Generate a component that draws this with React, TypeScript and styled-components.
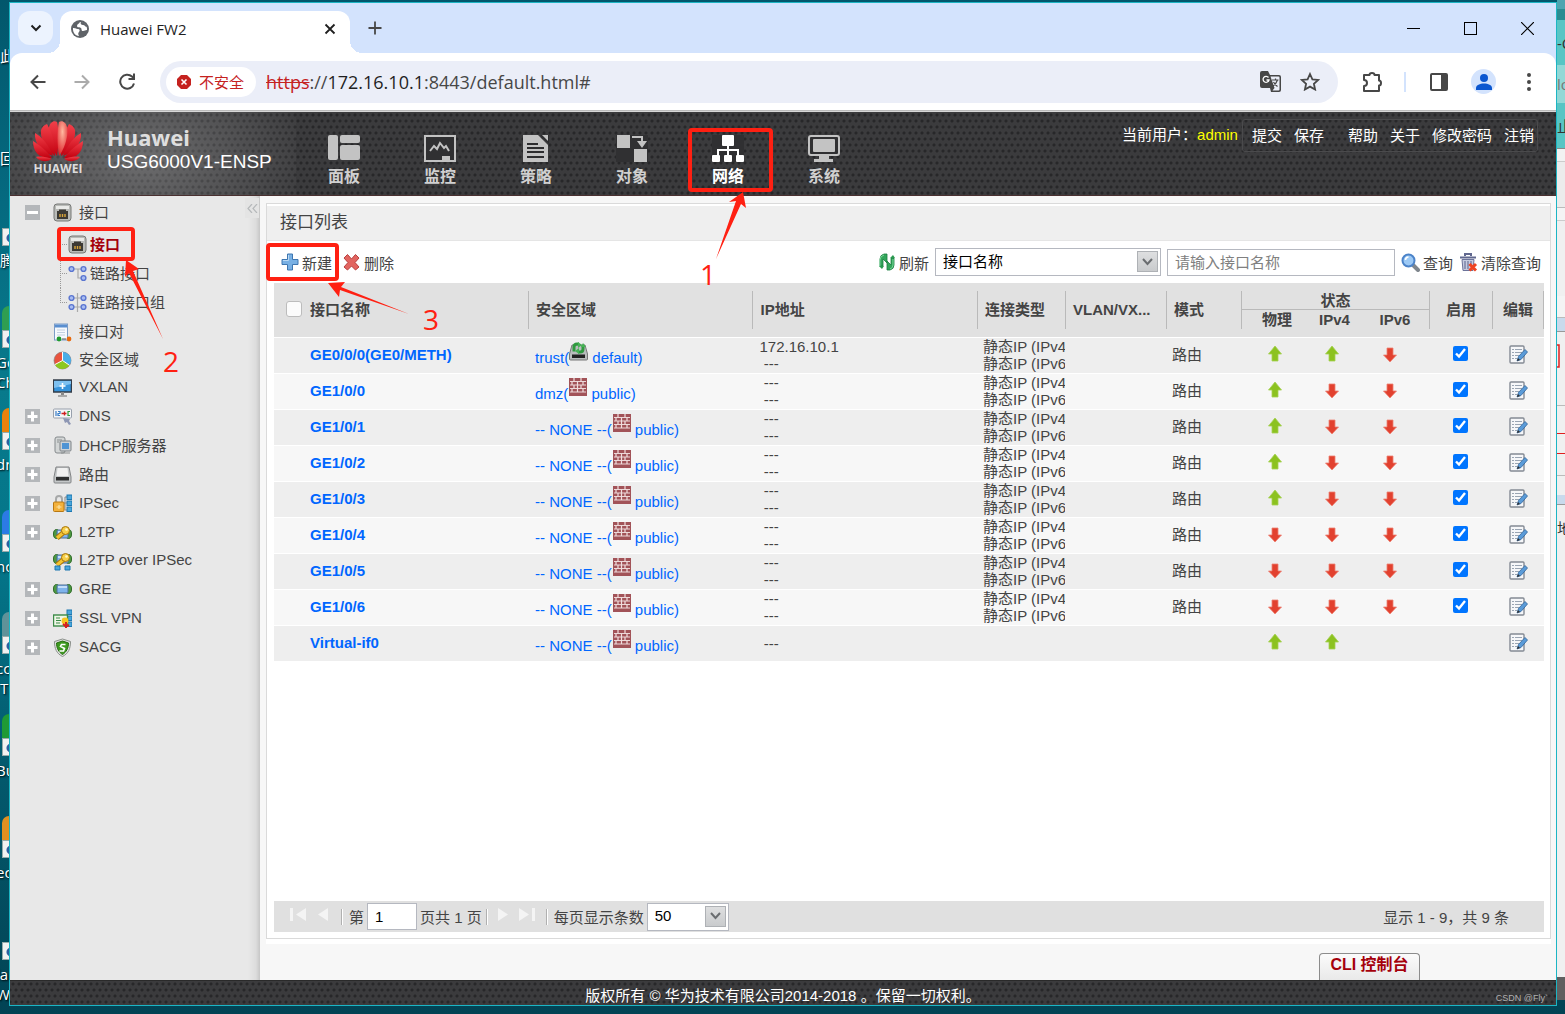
import React, { useState } from "react";
import styled, { createGlobalStyle, css } from "styled-components";

const sans = `"Liberation Sans", Arial, "Noto Sans CJK SC", sans-serif`;
const chromeSans = `"Open Sans", "Noto Sans CJK SC", sans-serif`;
const red = "#ff2012";
const teal = "#1cb5c4";

const GlobalStyle = createGlobalStyle`
  *, *::before, *::after { box-sizing: border-box; }
  body { margin: 0; font-family: ${sans}; font-size: 15px; color: #444; }
  button, input, select { font: inherit; color: inherit; margin: 0; }
  button { background: none; border: 0; padding: 0; cursor: pointer; }
  a { color: inherit; text-decoration: none; }
  svg { display: block; flex: none; }
`;

/* ---------- desktop behind the window ---------- */

const Desktop = styled.div`
  position: relative;
  display: grid;
  grid-template-columns: 9px minmax(0, 1fr) 8px;
  min-height: 100vh;
  background: linear-gradient(180deg, #02576c 0, #056a80 20%, #087a8c 38%, #04768a 55%, #035a6e 75%, #024354 100%);
`;

const LeftStrip = styled.div`
  height: 100vh;
  overflow: hidden;
`;

const Shortcut = styled.div<{ $first?: boolean }>`
  height: ${(p) => (p.$first ? 84 : 102)}px;
  color: #fff;
  line-height: 20px;
  white-space: nowrap;
  text-shadow: 1px 1px 2px #000;
  font-family: ${chromeSans};
`;

const ShortcutLabel = styled.div<{ $latin?: boolean }>`
  text-indent: ${(p) => (p.$latin ? -4 : 0)}px;
`;

const ShortcutIcon = styled.div<{ $short?: boolean; $tint?: string }>`
  height: ${(p) => (p.$short ? 42 : 60)}px;
  margin-bottom: 4px;
  padding-left: 2px;
  display: flex;
  flex-direction: column;
  justify-content: flex-end;
  &::before {
    content: "";
    height: 24px;
    border-radius: 8px 0 0 0;
    background: ${(p) => p.$tint || "transparent"};
  }
`;

const ShortcutArrow = styled.div`
  height: 18px;
  border: 1px solid #9aa;
  border-right: 0;
  background: radial-gradient(circle at 8px 9px, #2f5f9e 0 4px, #f1f1f1 5px);
`;

const RightStrip = styled.div`
  height: 100vh;
  overflow: hidden;
  white-space: nowrap;
  color: #333;
  font-family: ${chromeSans};
`;

const Slice = styled.div<{ $h: number; $bg: string; $line?: string; $c?: string }>`
  height: ${(p) => p.$h}px;
  background: ${(p) => p.$bg};
  border-bottom: ${(p) => (p.$line ? `1px solid ${p.$line}` : "0")};
  color: ${(p) => p.$c || "#333"};
  display: flex;
  align-items: center;
`;

/* ---------- browser window ---------- */

const Window = styled.div`
  display: flex;
  flex-direction: column;
  margin: 2px 0 8px;
  border: 1px solid ${teal};
  min-width: 0;
  background: #d3e3fd;
`;

const TabStrip = styled.div`
  display: flex;
  height: 50px;
  padding: 8px 0 0 8px;
  font-family: ${chromeSans};
  color: #1f1f1f;
`;

const TabSearch = styled.button`
  width: 35px;
  height: 34px;
  border-radius: 12px;
  background: #ecf3fe;
  display: grid;
  place-items: center;
`;

const Tab = styled.div`
  position: relative;
  display: flex;
  align-items: center;
  width: 290px;
  margin-left: 7px;
  padding: 0 14px 6px 11px;
  gap: 11px;
  border-radius: 12px 12px 0 0;
  background: #fff;
  &::before, &::after {
    content: "";
    position: absolute;
    bottom: 0;
    width: 12px;
    height: 12px;
  }
  &::before { left: -12px; background: radial-gradient(circle at 0 0, transparent 12px, #fff 12px); }
  &::after { right: -12px; background: radial-gradient(circle at 100% 0, transparent 12px, #fff 12px); }
`;

const TabTitle = styled.span`
  flex: 1;
`;

const NewTab = styled.button`
  width: 50px;
  padding-bottom: 8px;
  display: grid;
  place-items: center;
`;

const WindowControls = styled.div`
  display: flex;
  margin-left: auto;
`;

const WindowButton = styled.button`
  width: 57px;
  height: 34px;
  display: grid;
  place-items: center;
`;

const AddressBar = styled.div`
  display: flex;
  align-items: center;
  height: 58px;
  padding: 0 5px 0 18px;
  border-radius: 12px 12px 0 0;
  border-bottom: 1px solid #bbb;
  background: #fff;
  color: #474747;
`;

const ToolButton = styled.button<{ $w?: number }>`
  width: ${(p) => p.$w || 45}px;
  height: 34px;
  display: grid;
  place-items: center;
  &:first-child { width: 22px; padding-right: 2px; }
`;

const Omnibox = styled.div`
  flex: 1;
  display: flex;
  align-items: center;
  height: 42px;
  margin: 0 12px 0 19px;
  padding: 0 8px 0 6px;
  border-radius: 21px;
  background: #ebeef8;
  font-family: ${chromeSans};
`;

const SecurityChip = styled.button`
  display: flex;
  align-items: center;
  gap: 8px;
  height: 30px;
  padding: 0 12px 0 11px;
  border-radius: 15px;
  background: #fff;
  color: #c5221f;
`;

const Url = styled.div`
  flex: 1;
  padding-left: 10px;
  font-size: 18px;
  color: #474747;
  & s { color: #c5221f; }
  & b { font-weight: 400; color: #1f1f1f; }
`;

const BarDivider = styled.div`
  width: 2px;
  height: 20px;
  margin: 0 10px 0 9px;
  background: #d3e3fd;
`;

const Avatar = styled.button`
  width: 25px;
  height: 25px;
  margin: 0 10px;
  border-radius: 50%;
  background: #d3e3fd;
  display: grid;
  place-items: center;
`;

/* ---------- appliance console ---------- */

const mesh = css`
  background-color: #3b3b3d;
  background-image: radial-gradient(circle at 3px 3px, #272729 0 1px, transparent 2px),
    radial-gradient(circle at 3px 3px, #272729 0 1px, transparent 2px);
  background-size: 6px 12px;
  background-position: 0 0, 3px 6px;
`;

const AppHeader = styled.header`
  ${mesh}
  display: flex;
  height: 85px;
  border-top: 1px solid #d8d8d8;
  border-bottom: 1px solid #4a3030;
  color: #fff;
`;

const Brand = styled.div`
  display: flex;
  width: 286px;
  padding: 9px 0 0 22px;
  gap: 23px;
  white-space: nowrap;
  background: radial-gradient(ellipse 180px 120px at 130px 45px, rgba(255, 255, 255, 0.26), transparent);
`;

const LogoBlock = styled.div`
  width: 52px;
  text-align: center;
  font: 700 12px/14px "Open Sans", sans-serif;
  color: #dcdcdc;
`;

const BrandName = styled.div`
  padding-top: 2px;
  font: 700 22px/28px "Noto Sans", sans-serif;
  color: #dedede;
`;

const Model = styled.div`
  font-size: 19px;
  line-height: 22px;
`;

const TopNav = styled.nav`
  display: flex;
`;

const NavItem = styled.a<{ $active?: boolean }>`
  display: flex;
  flex-direction: column;
  align-items: center;
  width: 96px;
  padding-top: 23px;
  gap: 4px;
  font-size: 16px;
  font-weight: 700;
  line-height: 22px;
  color: ${(p) => (p.$active ? "#fff" : "#d0d0d0")};
`;

const Account = styled.div`
  display: flex;
  margin: 7px 18px 0 auto;
  height: 33px;
  line-height: 32px;
  white-space: nowrap;
`;

const UserName = styled.a`
  color: #ff0;
  margin-right: 4px;
`;

const AccountLinks = styled.div`
  display: flex;
  gap: 12px;
  padding: 0 3px 0 9px;
  border: 1px solid #4a4a4c;
  border-radius: 3px;
  & a:nth-child(3) { margin-left: 12px; }
`;

const Body = styled.div`
  flex: 1;
  display: flex;
  background: #f7f7f7;
`;

const Sidebar = styled.aside`
  position: relative;
  width: 250px;
  flex: none;
  padding-top: 2px;
  background: linear-gradient(90deg, transparent 238px, #dcdcdc 246px, #c6c6c6 250px), #e8e8e8;
`;

const Collapse = styled.button`
  position: absolute;
  top: 2px;
  right: 1px;
  width: 14px;
  height: 20px;
  background: #e4e4e4;
  display: grid;
  place-items: center;
`;

const TreeRow = styled.div<{ $child?: boolean; $leaf?: boolean }>`
  display: flex;
  align-items: center;
  height: ${(p) => (p.$leaf ? 28 : 29)}px;
  padding-left: ${(p) => (p.$child ? 0 : 15)}px;
`;

const ToggleSlot = styled.div`
  width: 28px;
  flex: none;
`;

const Toggle = styled.button`
  display: block;
  width: 15px;
  height: 15px;
  background: #b4b7ba;
`;

const TreeLink = styled.a<{ $active?: boolean; $child?: boolean }>`
  display: flex;
  align-items: center;
  gap: ${(p) => (p.$child ? 3 : 7)}px;
  color: ${(p) => (p.$active ? "#a5000b" : "#444")};
  font-weight: ${(p) => (p.$active ? 700 : 400)};
  & span { padding-bottom: 3px; }
`;

const Children = styled.div`
  margin-left: 50px;
  padding: 3px 0 1px;
`;

const Branch = styled.div<{ $last?: boolean }>`
  width: 8px;
  height: 29px;
  background:
    repeating-linear-gradient(90deg, #999 0 1px, transparent 1px 2px) 0 14px / 8px 1px no-repeat,
    repeating-linear-gradient(#999 0 1px, transparent 1px 2px) 0 0 / 1px ${(p) => (p.$last ? "14px" : "29px")} no-repeat;
`;

const Main = styled.main`
  flex: 1;
  min-width: 0;
  display: flex;
  flex-direction: column;
  padding: 7px 5px 0 6px;
`;

const Panel = styled.section`
  flex: 1;
  display: flex;
  flex-direction: column;
  border: 1px solid #dadada;
  box-shadow: 0 5px 0 #fff;
  background: #fff;
  padding-top: 2px;
`;

const PanelTitle = styled.h1`
  margin: 0;
  padding-left: 13px;
  height: 35px;
  font-size: 17px;
  font-weight: 400;
  line-height: 34px;
  background: #efefef;
  border-bottom: 1px solid #e5e5e5;
`;

const Toolbar = styled.div`
  display: flex;
  align-items: center;
  height: 42px;
  padding: 0 9px 0 14px;
  gap: 11px;
  white-space: nowrap;
`;

const Action = styled.button`
  display: flex;
  align-items: center;
  gap: 3px;
`;

const Filters = styled.div`
  display: flex;
  align-items: center;
  gap: 6px;
  margin-left: auto;
`;

const SelectBox = styled.div<{ $w: number }>`
  position: relative;
  width: ${(p) => p.$w}px;
  height: 28px;
  & select {
    appearance: none;
    width: 100%;
    height: 28px;
    padding: 0 26px 2px 7px;
    border: 1px solid #b5b8c0;
    border-radius: 0;
    background: #fff;
    color: #000;
  }
`;

const SelectArrow = styled.span`
  position: absolute;
  top: 3px;
  right: 3px;
  width: 21px;
  height: 21px;
  border: 1px solid #aeb1b5;
  background: linear-gradient(#dedfe0, #c9cbcd);
  display: grid;
  place-items: center;
  pointer-events: none;
`;

const TextInput = styled.input<{ $w: number }>`
  width: ${(p) => p.$w}px;
  height: 27px;
  padding: 0 7px;
  border: 1px solid #b5b8c0;
  background: #fff;
  color: #000;
  &::placeholder { color: #808080; }
`;

const Grid = styled.table`
  margin: 0 6px 0 7px;
  table-layout: fixed;
  border-collapse: separate;
  border-spacing: 0;
  line-height: 17px;
`;

const GridWrap = styled.div`
  flex: 1;
  & > table { width: calc(100% - 13px); }
`;

const Th = styled.th`
  height: 27px;
  padding: 0;
  background: #e1e1e1;
  text-align: left;
  vertical-align: middle;
  font-weight: 700;
  white-space: nowrap;
`;

const HeadCell = styled.div<{ $tall?: boolean; $line?: boolean; $under?: boolean; $center?: boolean; $end?: boolean; $pad?: number }>`
  display: flex;
  align-items: center;
  gap: 8px;
  justify-content: ${(p) => (p.$center ? "center" : "flex-start")};
  height: ${(p) => (p.$tall ? 38 : 19)}px;
  margin: ${(p) => (p.$tall ? "8px 0" : p.$under ? "8px 0 0" : "0 0 8px")};
  padding-left: ${(p) => (p.$pad !== undefined ? p.$pad : p.$center ? 0 : 7)}px;
  padding-bottom: ${(p) => (p.$tall ? 2 : 0)}px;
  border-left: ${(p) => (p.$line ? "1px solid #b9b9b9" : "0")};
  border-right: ${(p) => (p.$end ? "1px solid #b9b9b9" : "0")};
  border-bottom: ${(p) => (p.$under ? "1px solid #b9b9b9" : "0")};
`;

const HeadCheck = styled.input`
  width: 16px;
  height: 16px;
  appearance: none;
  border: 1px solid #bcbcbc;
  border-radius: 3px;
  background: #fbfbfb;
`;

const Tr = styled.tr`
  & td { background: #f7f7f7; }
  &:nth-child(odd) td { background: #eee; }
`;

const Td = styled.td<{ $pad?: number; $end?: number; $lift?: boolean; $center?: boolean }>`
  height: 36px;
  padding: 0 ${(p) => p.$end || 0}px ${(p) => (p.$lift ? 3 : 1)}px ${(p) => p.$pad || 0}px;
  border-top: 1px solid #fff;
  overflow: hidden;
  white-space: nowrap;
  text-align: ${(p) => (p.$center ? "center" : "left")};
  & > svg, & > button { margin: 0 auto; }
`;

const NameLink = styled.a`
  color: #06f;
  font-weight: 700;
`;

const ZoneLink = styled.a`
  color: #06f;
  & svg { display: inline-block; vertical-align: 2px; }
`;

const EnableCheck = styled.input`
  display: block;
  width: 15px;
  height: 15px;
  margin: 0 auto 2px;
  accent-color: #0075ff;
`;

const EditButton = styled.button`
  display: block;
`;

const Pager = styled.div`
  display: flex;
  align-items: center;
  height: 31px;
  margin: 0 6px 6px 7px;
  padding: 0 35px 0 15px;
  background: #e0e0e0;
  white-space: nowrap;
`;

const PageButton = styled.button`
  width: 18px;
  height: 20px;
  margin-right: 6px;
  display: grid;
  place-items: center;
  padding-bottom: 4px;
`;

const PagerDivider = styled.div`
  width: 2px;
  height: 16px;
  margin: 0 6px 0 4px;
  border-left: 1px solid #b0b0b0;
  border-right: 1px solid #fff;
`;

const PagerLabel = styled.label`
  display: flex;
  align-items: center;
  gap: 3px;
`;

const PagerSummary = styled.div`
  margin-left: auto;
`;

const ConsoleDock = styled.div`
  display: flex;
  justify-content: flex-end;
  align-items: flex-end;
  height: 41px;
  padding-right: 131px;
`;

const ConsoleTab = styled.button`
  width: 101px;
  height: 27px;
  padding-bottom: 4px;
  border: 1px solid #8c8c8c;
  border-bottom: 0;
  border-radius: 4px 4px 0 0;
  background: linear-gradient(#fbfbfb, #e9e9e9);
  color: #a5000b;
  font-size: 16px;
  line-height: 22px;
  font-weight: 700;
`;

const Footer = styled.footer`
  ${mesh}
  position: relative;
  height: 25px;
  padding-top: 4px;
  border-top: 1px solid #2a2a2a;
  color: #fff;
  text-align: center;
  line-height: 22px;
`;

const Credit = styled.span`
  position: absolute;
  right: 8px;
  bottom: 0;
  font-size: 9px;
  line-height: 14px;
  color: #b0b0b0;
`;

/* ---------- tutorial marks drawn on top ---------- */

const Frame = styled.div<{ $x: number; $y: number; $w: number; $h: number }>`
  position: absolute;
  left: ${(p) => p.$x}px;
  top: ${(p) => p.$y}px;
  width: ${(p) => p.$w}px;
  height: ${(p) => p.$h}px;
  border: 4px solid ${red};
  border-radius: 4px;
  pointer-events: none;
`;

const Arrows = styled.svg`
  position: absolute;
  left: 0;
  top: 0;
  fill: ${red};
  pointer-events: none;
`;

const Step = styled.span<{ $x: number; $y: number }>`
  position: absolute;
  left: ${(p) => p.$x}px;
  top: ${(p) => p.$y}px;
  color: ${red};
  font: 400 28px/32px "Open Sans", sans-serif;
`;

/* ---------- icons ---------- */

const stroke = (c: string, w = 2) => ({ fill: "none", stroke: c, strokeWidth: w });

const Globe = () => (
  <svg width="18" height="18" viewBox="0 0 18 18">
    <circle cx="9" cy="9" r="9" fill="#5f6368" />
    <path d="M2 8c3 0 3 1 5 1s2 2 1 3-1 2 0 4C4 16 1.600 12 2 8zM9 2c-1 2-3 2-3 4s3 1 4 2 0 3 2 3 2-1 4-1c.6-4-3-8-7-8z" fill="#fff" />
    <path d="M10 2c-1 1.500 0 3 2 3s2 2 4 2c-1-3-3-5-6-5z" fill="#5f6368" />
  </svg>
);

const Petals = () => (
  <svg width="52" height="41" viewBox="0 0 52 41">
    <defs>
      <linearGradient id="petal" x1="0" y1="0" x2="0" y2="1">
        <stop offset="0" stopColor="#f2404a" />
        <stop offset="1" stopColor="#c2000f" />
      </linearGradient>
      <radialGradient id="petalHot" cx=".5" cy=".3" r=".8">
        <stop offset="0" stopColor="#ffb9a0" />
        <stop offset="1" stopColor="#dc1420" />
      </radialGradient>
    </defs>
    <g fill="url(#petal)">
      <path d="M25 35C17 24 14 7 19 2c2-2 4-2 6-1 2 8 2 22 0 34z" />
      <path d="M23 35C12 27 8 16 9 9c1-3 3-5 6-6 5 8 8 20 8 32z" />
      <path d="M21 35C9 31 2 22 3 12c6 3 14 12 18 23z" />
      <path d="M20 37C8 38 1 32 1 20c5 3 14 10 19 17z" />
      <path d="M20 38C13 42 7 40 4 36c5-1 11 0 16 2z" />
      <path d="M29 35c11-8 15-19 14-26-1-3-3-5-6-6-5 8-8 20-8 32z" />
      <path d="M31 35c12-4 19-13 18-23-6 3-14 12-18 23z" />
      <path d="M32 37c12 1 19-5 19-17-5 3-14 10-19 17z" />
      <path d="M32 38c7 4 13 2 16-2-5-1-11 0-16 2z" />
    </g>
    <path d="M27 35c8-11 11-28 6-33-2-2-4-2-6-1-2 8-2 22 0 34z" fill="url(#petalHot)" />
  </svg>
);

const NavIcon = ({ name, active }: { name: string; active?: boolean }) => {
  const c = active ? "#fff" : "#c3c3c3";
  const shapes: Record<string, React.ReactNode> = {
    dash: <><rect x="0" y="0" width="10" height="25" rx="2" /><rect x="12" y="0" width="20" height="8" rx="2" /><rect x="12" y="10" width="20" height="15" rx="2" /></>,
    monitor: <><rect x="1" y="1" width="30" height="25" fill="#303032" stroke={c} strokeWidth="2" /><path d="M6 16l4-5 3 3 3-6 4 5 2-2 3 5" {...stroke(c)} /><path d="M18 21h8v5h-8z" /></>,
    policy: <><path d="M3 0h15l10 10v17H3z" /><path d="M20 0h9v9z" fill="#2d2d2f" /><path d="M22 0h6v6z" /><path d="M7 9h11M7 13h17M7 17h17M7 22h17" {...stroke("#2d2d2f")} /></>,
    object: <><rect x="0" y="0" width="32" height="27" fill="#303032" /><rect x="1" y="0" width="13" height="13" /><rect x="18" y="14" width="13" height="13" /><path d="M16 2h10v6" {...stroke(c)} /><path d="M21 6h10l-5 7z" /></>,
    network: <><rect x="0" y="0" width="32" height="27" fill="#303032" /><rect x="10" y="0" width="12" height="11" rx="1" /><path d="M16 11v10M6 21v-6h20v6" {...stroke(c)} /><rect x="0" y="20" width="8" height="7" rx="1" /><rect x="12" y="20" width="8" height="7" rx="1" /><rect x="24" y="20" width="8" height="7" rx="1" /></>,
    system: <><rect x="1" y="1" width="30" height="19" rx="2" fill="#303032" stroke={c} strokeWidth="2" /><rect x="5" y="4" width="22" height="13" rx="1" /><path d="M11 20h10v4h4v3H6v-3h5z" /></>,
  };
  return <svg width="32" height="27" viewBox="0 0 32 27" fill={c}>{shapes[name]}</svg>;
};

const Servers = () => (
  <g fill="#4aa7dc" stroke="#1d77b0">
    <rect x="14" y="1" width="5" height="4.500" /><rect x="14" y="7" width="5" height="4.500" /><rect x="14" y="13" width="5" height="4.500" />
  </g>
);

const Tube = ({ y = 7 }: { y?: number }) => (
  <g>
    <ellipse cx="3.500" cy={y + 4} rx="3" ry="4.500" fill="#4f9a42" stroke="#2d6b27" />
    <ellipse cx="15.500" cy={y + 4} rx="3" ry="4.500" fill="#4f9a42" stroke="#2d6b27" />
    <rect x="4" y={y} width="11" height="8" rx="1" fill="#7fb4ec" stroke="#4d6f96" />
    <path d={`M5 ${y + 2}h9`} stroke="#c4defa" strokeWidth="2" />
  </g>
);

const Key = ({ y = 0 }: { y?: number }) => (
  <g transform={`translate(0 ${y})`}>
    <path d="M4 13l7-6" stroke="#a8740a" strokeWidth="5" />
    <path d="M4 13l7-6" stroke="#f4c430" strokeWidth="3" />
    <circle cx="12.500" cy="5.500" r="4" fill="#f7cf48" stroke="#a8740a" />
    <circle cx="13.500" cy="4.500" r="1.300" fill="#fff6c8" />
  </g>
);

const Port = () => (
  <>
    <rect x="1" y="1" width="17" height="17" rx="3" fill="#b9bbb8" stroke="#767876" />
    <path d="M3 3h13v3H3z" fill="#e9eae8" />
    <path d="M4 8h2V6.500h7V8h2v8H4z" fill="#3c3a35" />
    <path d="M7 11v3M9.500 11v3M12 11v3" {...stroke("#d9a53a", 1.400)} />
  </>
);

const TreeIcon = ({ name }: { name: string }) => {
  const dot = (x: number, y: number) => <circle key={`${x}-${y}`} cx={x} cy={y} r="2.400" fill="#a9bdf2" stroke="#5b76d0" strokeWidth="1.400" />;
  const shapes: Record<string, React.ReactNode> = {
    port: <Port />,
    link: <><path d="M5 5h10M10 5v9h5" {...stroke("#aaa", 1.200)} />{dot(3.500, 5)}{dot(15.500, 5)}{dot(15.500, 14)}</>,
    group: <><path d="M9.500 0v19M3 5h13M3 14h13" {...stroke("#aaa", 1.200)} />{dot(3.500, 5)}{dot(15.500, 5)}{dot(3.500, 14)}{dot(15.500, 14)}</>,
    pair: <><rect x="1.500" y="1" width="13" height="16" fill="#f6f9fd" stroke="#7b9cc6" /><path d="M2 1.500h12v3H2z" fill="#5a8fd0" /><path d="M4 7h8M4 9.500h8M4 12h8" {...stroke("#c3d0e2", 1)} /><circle cx="6" cy="16" r="2.400" fill="#1f9a2d" /><circle cx="16" cy="16" r="2.400" fill="#e8690c" /><path d="M9 16h4" {...stroke("#555", 1)} /></>,
    zone: <><circle cx="9.500" cy="9.500" r="8.500" fill="#e9533e" stroke="#777" strokeWidth=".6" /><path d="M9.500 9.500V1a8.500 8.500 0 0 1 7 13.300z" fill="#4aaee8" /><path d="M9.500 9.500l7 4.800A8.500 8.500 0 0 1 2 13.500z" fill="#8cc820" /><path d="M9.500 1v8.500l7 4.800M9.500 9.500L2 13.500" {...stroke("#fff", 1)} /></>,
    vxlan: <><rect x=".5" y="1" width="18" height="12" fill="#3794dc" stroke="#333c48" strokeWidth="1.500" /><path d="M1 2h17v3L1 9z" fill="#7dc0f0" /><path d="M9.500 4v6M6.500 7h6" {...stroke("#fff", 1.600)} /><path d="M8 13h3v3H8z" fill="#888" /><path d="M5 16h9v2H5z" fill="#a9a9a9" /></>,
    dns: <><rect x=".5" y="2" width="18" height="9" rx="1" fill="#f5f6f8" stroke="#98a0ac" /><path d="M3 4v5M5 4.500h2v2H5v2h2" {...stroke("#3a7fc8", 1.200)} /><path d="M8.500 6.500h5M11.500 4.500v4" {...stroke("#cf2020", 1.400)} /><path d="M17 4.500h-2v4h2" {...stroke("#2e9b3b", 1.200)} /><path d="M10 11l7 1-1 2 2 3-2 1-2-3-2 1z" fill="#8e97b4" /></>,
    dhcp: <><rect x="2" y="1" width="10" height="16" rx="2" fill="#d3d6d6" stroke="#84898c" /><rect x="7" y="5" width="11" height="10" rx="1" fill="#cdd2d6" stroke="#7d8286" /><rect x="9" y="7" width="7" height="6" fill="#4f94d4" /><path d="M4 4h5M4 6h2M8 17h9" {...stroke("#8b8f90", 1)} /></>,
    route: <><path d="M3 2h13l2 10v5q0 1-1 1H2q-1 0-1-1v-5z" fill="#c4c7c8" stroke="#828486" /><path d="M4.500 3h10l1 8h-12z" fill="#f1f1f1" /><rect x="3" y="12" width="13" height="3.500" fill="#2f3030" /></>,
    ipsec: <><path d="M11 9h3M12 3v13M12 3h2M12 16h2" {...stroke("#888", 1)} /><Servers /><path d="M3 9V5a3 3 0 0 1 6 0v4" {...stroke("#a7a9a9", 2)} /><rect x=".5" y="8" width="10.500" height="9.500" rx="1" fill="#f3b13c" stroke="#b87812" /><path d="M3.500 13h5M6 11v4" {...stroke("#fbe3a4", 1.200)} /></>,
    l2tp: <><Tube /><Key y={2} /></>,
    l2tpip: <><Tube y={3} /><Key y={0} /><path d="M2 14h5v4H2zM12 14h5v4h-5z" fill="#4aa7dc" stroke="#1d77b0" /></>,
    gre: <Tube y={5} />,
    ssl: <><Servers /><rect x=".5" y="6" width="14" height="11" fill="#eef7e6" stroke="#3b8a46" strokeWidth="1.400" /><path d="M3 9h4M3 11.500h5M3 14h4" {...stroke("#3b8a46", 1.200)} /><circle cx="12" cy="12" r="3.400" fill="#f7c51e" /><path d="M10 15l3 2.500 3-1.500M13 13v6" {...stroke("#d81f1f", 2)} /></>,
    sacg: <><path d="M9.500 1l8 2.500c0 7-2 12-8 15-6-3-8-8-8-15z" fill="#e2e4e2" stroke="#8a8f8a" /><path d="M9.500 3l6 2c0 5-2 9-6 11.500C5.500 14 3.500 10 3.500 5z" fill="#3d9a1e" stroke="#256b10" /><path d="M12.500 6.500h-4l-1 2 4 2-1 2.500h-4" {...stroke("#fff", 1.600)} /></>,
  };
  return <svg width="19" height="19" viewBox="0 0 19 19">{shapes[name]}</svg>;
};

const ToggleGlyph = ({ open }: { open?: boolean }) => (
  <svg width="15" height="15" viewBox="0 0 15 15">
    <path d={open ? "M2 7.500h11" : "M2.500 7.500h10M7.500 2.500v10"} {...stroke("#fff", 3)} />
  </svg>
);

const ZoneBadge = ({ kind }: { kind: "default" | "public" }) =>
  kind === "default" ? (
    <svg width="19" height="19" viewBox="0 0 19 19">
      <path d="M3 3h13l2.500 9v5q0 1-1 1h-16q-1 0-1-1v-5z" fill="#b9bcbc" stroke="#777" />
      <rect x="3" y="12.500" width="13" height="3.500" fill="#222" />
      <path d="M5 9.500V5q0-3 3-3h2M14 3v4q0 3-3 3H9" {...stroke("#2f9a3e", 3)} />
      <path d="M9 0l4 3-4 3zM10 12L6 9l4-3zM12 5h5l-3-4z" fill="#46b255" />
    </svg>
  ) : (
    <svg width="19" height="19" viewBox="0 0 19 19">
      <rect x="1" y="0" width="18" height="18" fill="#a25358" />
      <path d="M2 3.500h16M2 7h16M2 10.500h16M2 14h16" {...stroke("#ecd8d8", 1.200)} />
      <path d="M6 0v3.500M13 0v3.500M9.500 3.500V14M4 3.500V7M15 3.500V7M6 7v3.500M13 7v3.500M4 10.500V14M15 10.500V14" {...stroke("#f0dede", 1.200)} />
    </svg>
  );

const StateArrow = ({ up }: { up?: boolean }) => (
  <svg width="14" height="16" viewBox="0 0 14 16" role="img" aria-label={up ? "up" : "down"}>
    {up ? (
      <path d="M7 0l6.500 8H10v7H4V8H.500z" fill="#8cc220" stroke="#a5d050" strokeWidth=".8" />
    ) : (
      <path d="M7 16l6.500-7H10V2H4v7H.500z" fill="#e2412f" stroke="#ee8072" strokeWidth=".8" />
    )}
  </svg>
);

const EditIcon = () => (
  <svg width="19" height="19" viewBox="0 0 19 19">
    <rect x="1" y="1" width="14" height="17" rx="1" fill="#f6f7f9" stroke="#848a94" strokeWidth="1.400" />
    <path d="M3 4.500h2M6 4.500h7M3 7.500h2M6 7.500h7M3 10.500h2M6 10.500h4M3 13.500h2M6 13.500h2" {...stroke("#9aa5b3", 1)} />
    <path d="M8 16l1.500-4.500L16 4.500l2.500 2.500L12 14.500z" fill="#5a9bd8" stroke="#2f6298" strokeWidth=".8" />
    <path d="M8 16l1-3 2 2z" fill="#333" />
  </svg>
);

const PlusIcon = () => (
  <svg width="18" height="18" viewBox="0 0 18 18">
    <path d="M6.500 1h5v5.500H17v5h-5.500V17h-5v-5.500H1v-5h5.500z" fill="#78b0e4" stroke="#3e76b0" />
    <path d="M7.500 2v5.500H2" {...stroke("#b9d9f5", 1)} />
  </svg>
);

const CrossIcon = () => (
  <svg width="18" height="18" viewBox="0 0 18 18">
    <path d="M4.500 1.500L8.500 6 12.500 1.500 16 5l-4 4.500 4 4.500-3.500 3-4-4-4 4L1 14l4-4.500L1 5z" fill="#e26560" stroke="#b8403e" strokeLinejoin="round" />
  </svg>
);

const RefreshIcon = () => (
  <svg width="18" height="18" viewBox="0 0 18 18">
    <path d="M2 13V6q0-4 4-5h3v9L5 6v7z" fill="#32a55a" stroke="#1b7d3f" strokeWidth=".8" />
    <path d="M2 14V7q0-4 4-5" {...stroke("#7ad69a", 1)} />
    <path d="M16 5v7q0 4-4 5H9V8l4 4V5z" fill="#32a55a" stroke="#1b7d3f" strokeWidth=".8" />
    <path d="M15 6v6q0 3-3 4" {...stroke("#7ad69a", 1)} />
    <path d="M1 13h5l-2 3zM12 5h5l-2-3z" fill="#2a9a50" />
  </svg>
);

const SearchIcon = () => (
  <svg width="19" height="19" viewBox="0 0 19 19">
    <path d="M12 12l5 5" stroke="#7f868d" strokeWidth="4" strokeLinecap="round" />
    <circle cx="7.500" cy="7.500" r="6" fill="#9cc9f5" stroke="#4b83c9" strokeWidth="2" />
    <path d="M4.500 7a3 3 0 0 1 3-3" {...stroke("#fff", 1.600)} />
  </svg>
);

const TrashIcon = () => (
  <svg width="19" height="19" viewBox="0 0 19 19">
    <path d="M6 3V1h6v2M1 4.500h16" {...stroke("#61688f", 2)} />
    <path d="M3 6.500h12l-1 11H4z" fill="#c6cce0" stroke="#6c739a" />
    <path d="M6 8v8M9 8v8M12 8v4" {...stroke("#6c739a", 1.200)} />
    <path d="M10.500 11l6.500 6.500M17 11l-6.500 6.500" {...stroke("#ef4422", 3)} />
  </svg>
);

const Chevron = () => (
  <svg width="11" height="8" viewBox="0 0 11 8"><path d="M1 1l4.500 5L10 1" {...stroke("#6a6d70", 2)} /></svg>
);

/* ---------- data ---------- */

const navItems = [
  ["dash", "面板"], ["monitor", "监控"], ["policy", "策略"],
  ["object", "对象"], ["network", "网络"], ["system", "系统"],
];

const treeChildren = [["port", "接口"], ["link", "链路接口"], ["group", "链路接口组"]];

const treeItems: [string, string, boolean][] = [
  ["pair", "接口对", false], ["zone", "安全区域", false], ["vxlan", "VXLAN", false],
  ["dns", "DNS", true], ["dhcp", "DHCP服务器", true], ["route", "路由", true],
  ["ipsec", "IPSec", true], ["l2tp", "L2TP", true], ["l2tpip", "L2TP over IPSec", false],
  ["gre", "GRE", true], ["ssl", "SSL VPN", true], ["sacg", "SACG", true],
];

type Row = { name: string; zone: string; vsys: "default" | "public"; ip: string[]; state: boolean[]; virtual?: boolean };

const none = "-- NONE --";
const blank = ["\u00a0---", "\u00a0---"];
const rows: Row[] = [
  { name: "GE0/0/0(GE0/METH)", zone: "trust", vsys: "default", ip: ["172.16.10.1", "\u00a0---"], state: [true, true, false] },
  { name: "GE1/0/0", zone: "dmz", vsys: "public", ip: blank, state: [true, false, false] },
  { name: "GE1/0/1", zone: none, vsys: "public", ip: blank, state: [true, false, false] },
  { name: "GE1/0/2", zone: none, vsys: "public", ip: blank, state: [true, false, false] },
  { name: "GE1/0/3", zone: none, vsys: "public", ip: blank, state: [true, false, false] },
  { name: "GE1/0/4", zone: none, vsys: "public", ip: blank, state: [false, false, false] },
  { name: "GE1/0/5", zone: none, vsys: "public", ip: blank, state: [false, false, false] },
  { name: "GE1/0/6", zone: none, vsys: "public", ip: blank, state: [false, false, false] },
  { name: "Virtual-if0", zone: none, vsys: "public", ip: ["\u00a0---"], state: [true, true], virtual: true },
];

const columnWidths = [88, 101, 75, 63, 57, 68, 63, 52];

const statePadding = [
  { start: 6, end: 0 },
  { start: 0, end: 0 },
  { start: 0, end: 10 },
];

const shortcuts: { tint?: string; lines: string[]; bare?: boolean }[] = [
  { lines: ["回"], bare: true }, { lines: ["腾"] }, { tint: "#2f9e52", lines: ["Go", "Ch"] },
  { tint: "#e8820c", lines: ["dn"] }, { tint: "#2c7be5", lines: ["nc"] }, { tint: "#5f9299", lines: ["cc", "T"] },
  { tint: "#1f9a35", lines: ["Bu"] }, { tint: "#e09020", lines: ["ec"] }, { lines: ["la", "Wi"] },
];

/* ---------- sections ---------- */

const BrowserChrome = () => (
  <>
    <TabStrip>
      <TabSearch aria-label="Search tabs">
        <svg width="12" height="8" viewBox="0 0 12 8"><path d="M1.500 1.500L6 6l4.500-4.500" {...stroke("#1f1f1f")} /></svg>
      </TabSearch>
      <Tab>
        <Globe />
        <TabTitle>Huawei FW2</TabTitle>
        <button aria-label="Close tab">
          <svg width="12" height="12" viewBox="0 0 12 12"><path d="M1.500 1.500l9 9M10.500 1.500l-9 9" {...stroke("#1f1f1f", 1.800)} /></svg>
        </button>
      </Tab>
      <NewTab aria-label="New tab">
        <svg width="14" height="14" viewBox="0 0 14 14"><path d="M7 .5v13M.5 7h13" {...stroke("#474747", 1.800)} /></svg>
      </NewTab>
      <WindowControls>
        <WindowButton aria-label="Minimize"><svg width="13" height="13" viewBox="0 0 13 13"><path d="M0 6.500h13" {...stroke("#000", 1)} /></svg></WindowButton>
        <WindowButton aria-label="Maximize"><svg width="13" height="13" viewBox="0 0 13 13"><rect x=".5" y=".5" width="12" height="12" {...stroke("#000", 1)} /></svg></WindowButton>
        <WindowButton aria-label="Close"><svg width="13" height="13" viewBox="0 0 13 13"><path d="M0 0l13 13M13 0L0 13" {...stroke("#000", 1.200)} /></svg></WindowButton>
      </WindowControls>
    </TabStrip>
    <AddressBar>
      <ToolButton aria-label="Back"><svg width="16" height="16" viewBox="0 0 16 16"><path d="M15.500 8H2M8 1.500L1.500 8 8 14.500" {...stroke("#474747")} /></svg></ToolButton>
      <ToolButton aria-label="Forward" $w={64}><svg width="16" height="16" viewBox="0 0 16 16"><path d="M.5 8H14M8 1.500L14.500 8 8 14.500" {...stroke("#ababab")} /></svg></ToolButton>
      <ToolButton aria-label="Reload" $w={27}><svg width="17" height="17" viewBox="0 0 17 17"><path d="M15 10.500A7 7 0 1 1 13 3.500L15.500 6" {...stroke("#474747")} /><path d="M16 .5V7H9.500V5H14V.5z" fill="#474747" /></svg></ToolButton>
      <Omnibox>
        <SecurityChip>
          <svg width="14" height="14" viewBox="0 0 14 14"><path d="M4 0h6l4 4v6l-4 4H4l-4-4V4z" fill="#c5221f" /><path d="M4.500 4.500l5 5M9.500 4.500l-5 5" {...stroke("#fff", 1.600)} /></svg>
          不安全
        </SecurityChip>
        <Url><s>https</s>://<b>172.16.10.1</b>:8443/default.html#</Url>
        <ToolButton aria-label="Translate" $w={40}>
          <svg width="21" height="21" viewBox="0 0 21 21"><path d="M2 0h6l2 4h9a2 2 0 0 1 2 2v13a2 2 0 0 1-2 2h-8l-1-4H2a2 2 0 0 1-2-2V2a2 2 0 0 1 2-2z" fill="#474747" /><path d="M10.500 5.500h8q1 0 1 1v12q0 1-1 1h-6l2-2.500z" fill="#ebeef8" /><path d="M8.500 6.500A3 3 0 1 0 9 9H6.500" {...stroke("#fff", 1.300)} /><path d="M12 9h6.500M15.500 7.500V9M17.500 9c-1 3-2.500 4.500-4.500 6M13.500 11c1 2 2 3 4 4.500" {...stroke("#474747", 1.200)} /></svg>
        </ToolButton>
        <ToolButton aria-label="Bookmark" $w={40}>
          <svg width="20" height="19" viewBox="0 0 20 19"><path d="M10 2l2.400 5.300 5.800.6-4.300 3.900 1.200 5.700-5.100-2.900-5.100 2.900 1.200-5.700L1.800 7.900l5.800-.6z" {...stroke("#474747", 1.800)} /></svg>
        </ToolButton>
      </Omnibox>
      <ToolButton aria-label="Extensions"><svg width="21" height="22" viewBox="0 0 21 22"><path d="M2 4h5.500a2.500 2 0 0 1 5 0H17v5.500a2 2.500 0 0 1 0 5V20H2v-5a3 3 0 0 0 0-6z" {...stroke("#474747")} strokeLinejoin="round" /></svg></ToolButton>
      <BarDivider />
      <ToolButton aria-label="Side panel"><svg width="18" height="18" viewBox="0 0 18 18"><rect x="1" y="1" width="16" height="16" rx="1" {...stroke("#474747")} /><path d="M11 1h6v16h-6z" fill="#474747" /></svg></ToolButton>
      <Avatar aria-label="Profile"><svg width="16" height="16" viewBox="0 0 16 16" fill="#0b57d0"><circle cx="8" cy="4" r="4" /><path d="M0 16v-2c0-6 16-6 16 0v2z" /></svg></Avatar>
      <ToolButton aria-label="Menu"><svg width="4" height="18" viewBox="0 0 4 18" fill="#474747"><circle cx="2" cy="2" r="2" /><circle cx="2" cy="9" r="2" /><circle cx="2" cy="16" r="2" /></svg></ToolButton>
    </AddressBar>
  </>
);

const Header = () => (
  <AppHeader>
    <Brand>
      <LogoBlock><Petals />HUAWEI</LogoBlock>
      <div><BrandName>Huawei</BrandName><Model>USG6000V1-ENSP</Model></div>
    </Brand>
    <TopNav>
      {navItems.map(([icon, label]) => (
        <NavItem key={icon} href="#" $active={icon === "network"}>
          <NavIcon name={icon} active={icon === "network"} />
          {label}
        </NavItem>
      ))}
    </TopNav>
    <Account>
      <span>当前用户：</span>
      <UserName href="#">admin</UserName>
      <AccountLinks>
        {["提交", "保存", "帮助", "关于", "修改密码", "注销"].map((t) => <a key={t} href="#">{t}</a>)}
      </AccountLinks>
    </Account>
  </AppHeader>
);

const Tree = () => (
  <Sidebar>
    <Collapse aria-label="Collapse">
      <svg width="11" height="9" viewBox="0 0 11 9"><path d="M5 0L1 4.500 5 9M10 0L6 4.500 10 9" {...stroke("#b5b8ba", 1.200)} /></svg>
    </Collapse>
    <TreeRow>
      <ToggleSlot><Toggle aria-label="Collapse 接口"><ToggleGlyph open /></Toggle></ToggleSlot>
      <TreeLink href="#"><TreeIcon name="port" /><span>接口</span></TreeLink>
    </TreeRow>
    <Children>
      {treeChildren.map(([icon, label], i) => (
        <TreeRow key={label} $child>
          <Branch $last={i === 2} />
          <TreeLink href="#" $child $active={i === 0}><TreeIcon name={icon} /><span>{label}</span></TreeLink>
        </TreeRow>
      ))}
    </Children>
    {treeItems.map(([icon, label, expandable]) => (
      <TreeRow key={label} $leaf={!expandable}>
        <ToggleSlot>{expandable && <Toggle aria-label={`Expand ${label}`}><ToggleGlyph /></Toggle>}</ToggleSlot>
        <TreeLink href="#"><TreeIcon name={icon} /><span>{label}</span></TreeLink>
      </TreeRow>
    ))}
  </Sidebar>
);

const InterfaceTable = () => {
  const [enabled, setEnabled] = useState<boolean[]>(rows.map(() => true));
  return (
    <GridWrap>
      <Grid>
        <colgroup>
          <col style={{ width: "20%" }} /><col /><col />
          {columnWidths.map((w, i) => <col key={i} style={{ width: w }} />)}
        </colgroup>
        <thead>
          <tr>
            <Th rowSpan={2}><HeadCell $tall $pad={12}><HeadCheck type="checkbox" aria-label="全选" />接口名称</HeadCell></Th>
            <Th rowSpan={2}><HeadCell $tall $line>安全区域</HeadCell></Th>
            <Th rowSpan={2}><HeadCell $tall $line>IP地址</HeadCell></Th>
            <Th rowSpan={2}><HeadCell $tall $line>连接类型</HeadCell></Th>
            <Th rowSpan={2}><HeadCell $tall $line>VLAN/VX...</HeadCell></Th>
            <Th rowSpan={2}><HeadCell $tall $line>模式</HeadCell></Th>
            <Th colSpan={3}><HeadCell $line $under $center>状态</HeadCell></Th>
            <Th rowSpan={2}><HeadCell $tall $line $center>启用</HeadCell></Th>
            <Th rowSpan={2}><HeadCell $tall $line $center $end>编辑</HeadCell></Th>
          </tr>
          <tr>
            <Th><HeadCell $line $center $pad={8}>物理</HeadCell></Th>
            <Th><HeadCell $center $pad={4}>IPv4</HeadCell></Th>
            <Th><HeadCell $center>IPv6</HeadCell></Th>
          </tr>
        </thead>
        <tbody>
          {rows.map((r, i) => (
            <Tr key={r.name}>
              <Td $pad={36} $lift><NameLink href="#">{r.name}</NameLink></Td>
              <Td $pad={7} $lift><ZoneLink href="#">{r.zone}(<ZoneBadge kind={r.vsys} /> {r.vsys})</ZoneLink></Td>
              <Td $pad={7}>{r.ip.map((t, k) => <div key={k}>{t}</div>)}</Td>
              <Td $pad={6}>{!r.virtual && <><div>静态IP (IPv4)</div><div>静态IP (IPv6)</div></>}</Td>
              <Td />
              <Td $pad={6} $lift>{!r.virtual && "路由"}</Td>
              {statePadding.map((pad, k) => (
                <Td key={k} $center $lift $pad={pad.start} $end={pad.end}>
                  {r.state[k] !== undefined && <StateArrow up={r.state[k]} />}
                </Td>
              ))}
              <Td $center $lift>
                {!r.virtual && (
                  <EnableCheck
                    type="checkbox"
                    aria-label={`启用 ${r.name}`}
                    checked={enabled[i]}
                    onChange={() => setEnabled(enabled.map((v, k) => (k === i ? !v : v)))}
                  />
                )}
              </Td>
              <Td $center $lift><EditButton aria-label={`编辑 ${r.name}`}><EditIcon /></EditButton></Td>
            </Tr>
          ))}
        </tbody>
      </Grid>
    </GridWrap>
  );
};

const pageShapes = {
  first: "M0 1h3v13H0zM16 1v13L6 7.500z",
  prev: "M14 1v13L4 7.500z",
  next: "M3 1v13l10-6.500z",
  last: "M0 1v13l10-6.500zM13 1h3v13h-3z",
};

const PageIcon = ({ kind }: { kind: keyof typeof pageShapes }) => (
  <PageButton aria-label={kind}>
    <svg width="16" height="15" viewBox="0 0 16 15"><path d={pageShapes[kind]} fill="#f4f4f4" /></svg>
  </PageButton>
);

const PagerBar = () => (
  <Pager>
    <PageIcon kind="first" />
    <PageIcon kind="prev" />
    <PagerDivider />
    <PagerLabel>第<TextInput $w={50} defaultValue="1" />页共 1 页</PagerLabel>
    <PagerDivider />
    <PageIcon kind="next" />
    <PageIcon kind="last" />
    <PagerDivider />
    <PagerLabel>
      每页显示条数
      <SelectBox $w={82}>
        <select defaultValue="50"><option>50</option></select>
        <SelectArrow><Chevron /></SelectArrow>
      </SelectBox>
    </PagerLabel>
    <PagerSummary>显示 1 - 9，共 9 条</PagerSummary>
  </Pager>
);

export default function App() {
  return (
    <Desktop>
      <GlobalStyle />
      <LeftStrip>
        <Shortcut $first><ShortcutIcon $short />此</Shortcut>
        {shortcuts.map((s) => (
          <Shortcut key={s.lines[0]}>
            <ShortcutIcon $tint={s.tint}>{!s.bare && <ShortcutArrow />}</ShortcutIcon>
            {s.lines.map((l) => <ShortcutLabel key={l} $latin={l.length > 1}>{l}</ShortcutLabel>)}
          </Shortcut>
        ))}
      </LeftStrip>
      <Window>
        <BrowserChrome />
        <Header />
        <Body>
          <Tree />
          <Main>
            <Panel>
              <PanelTitle>接口列表</PanelTitle>
              <Toolbar>
                <Action><PlusIcon />新建</Action>
                <Action><CrossIcon />删除</Action>
                <Filters>
                  <Action><RefreshIcon />刷新</Action>
                  <SelectBox $w={226}>
                    <select aria-label="查询条件" defaultValue="接口名称"><option>接口名称</option></select>
                    <SelectArrow><Chevron /></SelectArrow>
                  </SelectBox>
                  <TextInput $w={228} placeholder="请输入接口名称" aria-label="接口名称" />
                  <Action><SearchIcon />查询</Action>
                  <Action><TrashIcon />清除查询</Action>
                </Filters>
              </Toolbar>
              <InterfaceTable />
              <PagerBar />
            </Panel>
            <ConsoleDock><ConsoleTab>CLI 控制台</ConsoleTab></ConsoleDock>
          </Main>
        </Body>
        <Footer>
          版权所有 © 华为技术有限公司2014-2018 。保留一切权利。
          <Credit>CSDN @Fly`</Credit>
        </Footer>
      </Window>
      <RightStrip>
        <Slice $h={9} $bg="#4ea5b0" />
        <Slice $h={11} $bg="#2a8c91" />
        <Slice $h={45} $bg="#58c5c4">-C</Slice>
        <Slice $h={38} $bg="#93d8d6" $c="#777">lo</Slice>
        <Slice $h={46} $bg="#58c5c4" $line="#888">止</Slice>
        <Slice $h={13} $bg="#f2f2f2" $line="#ccc" />
        <Slice $h={46} $bg="#ececec" $line="#bbb" />
        <Slice $h={13} $bg="#f4f4f4" $line="#ccc" />
        <Slice $h={75} $bg="#f0f0f0" />
        <Slice $h={22} $bg="#f4f4f4" $line="#bbb" />
        <Slice $h={14} $bg="#c9daec" $line="#999" />
        <Slice $h={12} $bg="#f0f0f0" />
        <Slice $h={24} $bg="#f0f0f0"><svg width="3" height="24"><path d="M0 1h2v22H0" {...stroke("#e02020", 1.500)} /></svg></Slice>
        <Slice $h={38} $bg="#f0f0f0" $line="#bbb" />
        <Slice $h={28} $bg="#f0f0f0" $line="#e02020" />
        <Slice $h={20} $bg="#f0f0f0" $line="#e02020" />
        <Slice $h={22} $bg="#f0f0f0" $line="#bbb" />
        <Slice $h={19} $bg="#f0f0f0" />
        <Slice $h={10} $bg="#c9daec" $line="#999" />
        <Slice $h={44} $bg="#f0f0f0">地</Slice>
        <Slice $h={428} $bg="#f0f0f0" />
        <Slice $h={23} $bg="#606060" />
      </RightStrip>

      <Frame $x={688} $y={128} $w={85} $h={64} />
      <Frame $x={57} $y={227} $w={78} $h={34} />
      <Frame $x={266} $y={243} $w={73} $h={38} />
      <Arrows width="780" height="350" viewBox="0 0 780 350" aria-hidden="true">
        <path d="M743 192L729 202l7-1-20 58 25-55 5 4z" />
        <path d="M126 260l-1 17 4-4 34 66-30-68 6-2z" />
        <path d="M328 283l17-1-4 5 68 27-69-24-1 7z" />
      </Arrows>
      <Step $x={700} $y={258}>1</Step>
      <Step $x={163} $y={345}>2</Step>
      <Step $x={423} $y={303}>3</Step>
    </Desktop>
  );
}
